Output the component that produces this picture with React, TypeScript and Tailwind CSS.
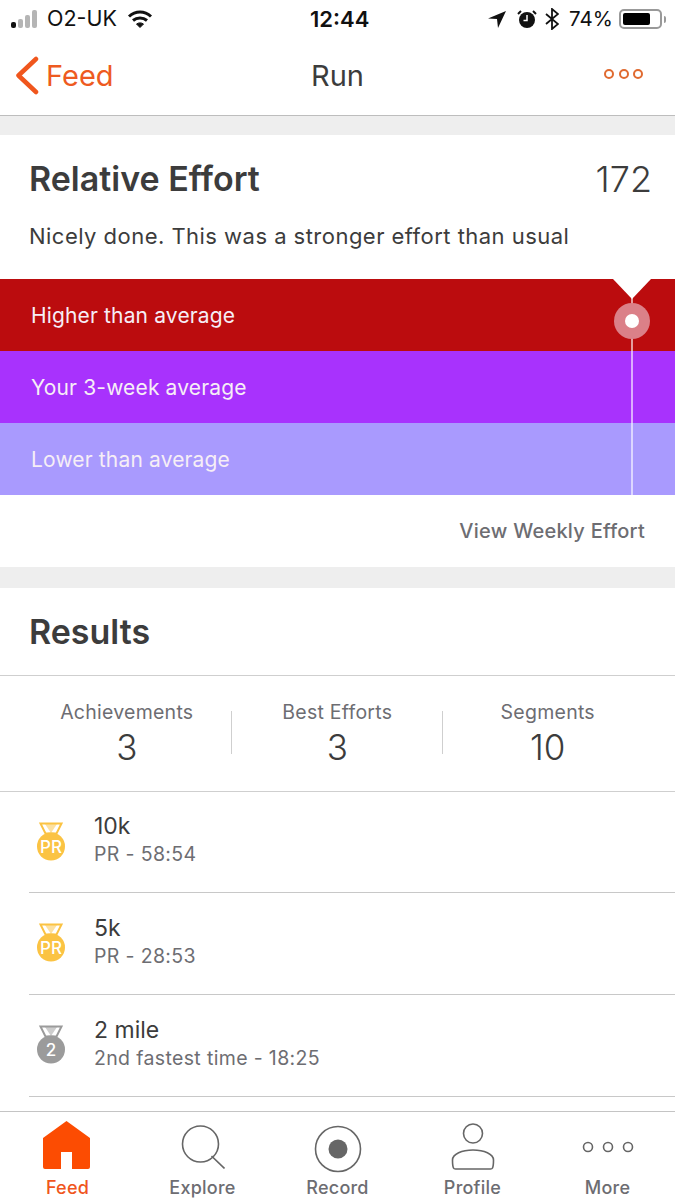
import type { ReactNode } from 'react'

const FONT = "font-['Inter','Noto_Sans',sans-serif]"

// Medal used in the results list
function Medal({ color, label }: { color: string; label: string }) {
  return (
    <svg width="30" height="40" viewBox="0 0 30 40">
      <path d="M4.500 1.500h21l-5 10H9.500z" fill="none" stroke={color} strokeWidth="2" />
      <path d="M9 2l6 9 6-9z" fill={color} opacity="0.5" />
      <circle cx="15" cy="24.500" r="14" fill={color} />
      <text x="15" y="30.500" textAnchor="middle" fontSize="17" fontWeight="500" fill="#fff" fontFamily="Inter, sans-serif">
        {label}
      </text>
    </svg>
  )
}

function StatusBar() {
  return (
    <div className="relative flex h-[38px] items-center pl-[11px] pr-[9px] text-[21px] text-[#111]">
      <div className="flex items-end gap-[2px]">
        <span className="h-[6px] w-[5px] rounded-[2px] bg-[#111]" />
        <span className="h-[9px] w-[5px] rounded-[2px] bg-[#b5b5b5]" />
        <span className="h-[13px] w-[5px] rounded-[2px] bg-[#b5b5b5]" />
        <span className="h-[18px] w-[5px] rounded-[2px] bg-[#b5b5b5]" />
      </div>
      <span className="ml-[10px] text-[21.500px] leading-none">O2-UK</span>
      <svg className="ml-[10px]" width="26" height="20" viewBox="0 0 26 20" fill="none" stroke="#111" strokeWidth="3">
        <path d="M2 7.500c6.500-6 15.500-6 22 0" />
        <path d="M6 11.500c4-3.500 10-3.500 14 0" />
        <path d="M13 18.500l-3.500-3.500c2-1.500 5-1.500 7 0z" fill="#111" strokeWidth="1" />
      </svg>
      <span className="absolute left-[310px] text-[22px] font-semibold leading-none">12:44</span>
      <div className="absolute left-[488px] flex items-center">
        <svg width="18" height="18" viewBox="0 0 18 18">
          <path d="M18 1L0 8.500l9 .5 1 9z" fill="#111" />
        </svg>
        <svg className="ml-[11px]" width="20" height="20" viewBox="0 0 20 20">
          <circle cx="10" cy="11" r="8" fill="#111" />
          <path d="M10 6v5.500H6.500" fill="none" stroke="#fff" strokeWidth="1.500" />
          <path d="M1 5l3-3M19 5l-3-3" stroke="#111" strokeWidth="2" />
        </svg>
        <svg className="ml-[8px]" width="14" height="22" viewBox="0 0 14 22" fill="none" stroke="#111" strokeWidth="1.800">
          <path d="M1 6l12 10-6 5V1l6 5L1 16" />
        </svg>
        <span className="ml-[10px] text-[20.500px] leading-none">74%</span>
        <div className="ml-[6px] flex h-[20px] w-[43px] items-center rounded-[5px] border-2 border-[#999] p-[2px]">
          <div className="h-full w-[27px] rounded-[2px] bg-black" />
        </div>
        <span className="ml-[2px] h-[7px] w-[2px] rounded-r bg-[#999]" />
      </div>
    </div>
  )
}

function NavBar() {
  return (
    <div className="relative flex h-[78px] items-center border-b border-[#bdbdbd] pb-[2px]">
      <svg className="ml-[15px]" width="24" height="40" viewBox="0 0 24 40" fill="none" stroke="#f0561d" strokeWidth="4.500" strokeLinecap="round" strokeLinejoin="round">
        <path d="M21 3L3.500 19.500 21 36" />
      </svg>
      <span className="ml-[7px] text-[29px] leading-none text-[#ee5a21]">Feed</span>
      <span className="absolute left-0 right-0 text-center text-[29px] leading-none text-[#3c3c3c]">Run</span>
      <div className="mb-[4px] ml-auto mr-[32px] flex gap-[4.500px]">
        <span className="size-[10px] rounded-full border-2 border-[#e06a30]" />
        <span className="size-[10px] rounded-full border-2 border-[#e06a30]" />
        <span className="size-[10px] rounded-full border-2 border-[#e06a30]" />
      </div>
    </div>
  )
}

function EffortBand({ bg, label }: { bg: string; label: string }) {
  return (
    <div className={`flex h-[72px] items-center pl-[31px] pt-[2px] text-[21px] tracking-[0.15px] ${bg} text-[#f6eef6]`}>
      {label}
    </div>
  )
}

function RelativeEffort() {
  return (
    <section className="bg-white">
      <div className="flex h-[144px] flex-col px-[29px] pt-[20px]">
        <div className="flex items-center justify-between">
          <h2 className="text-[34px] font-semibold leading-[48px] text-[#3c3c3c]">Relative Effort</h2>
          <span className="mr-[-6px] text-[36px] font-[350] leading-[48px] text-[#3c3c3c]">172</span>
        </div>
        <p className="mt-[18px] text-[22px] leading-[30px] tracking-[0.47px] text-[#3c3c3c]">
          Nicely done. This was a stronger effort than usual
        </p>
      </div>
      <div className="relative">
        <EffortBand bg="bg-[#bb0c0e]" label="Higher than average" />
        <EffortBand bg="bg-[#a832fd]" label="Your 3-week average" />
        <EffortBand bg="bg-[#a99afe]" label="Lower than average" />
        {/* marker over the bands */}
        <div className="absolute left-[631px] top-[19px] h-[197px] w-[2px] bg-white/60" />
        <div className="absolute left-[614px] top-[24px] flex size-[36px] items-center justify-center rounded-full bg-[#db8088]">
          <span className="size-[14px] rounded-full bg-white" />
        </div>
        <svg className="absolute left-[613px] top-0" width="38" height="20" viewBox="0 0 38 20">
          <path d="M0 0h38L19 20z" fill="#fff" />
        </svg>
      </div>
      <div className="flex h-[72px] items-center justify-end pr-[30px] text-[20px] font-medium tracking-[0.25px] text-[#6d6d72]">
        View Weekly Effort
      </div>
    </section>
  )
}

function Stat({ label, value, divider }: { label: string; value: string; divider?: boolean }) {
  return (
    <div className="relative flex w-[210.500px] flex-col items-center">
      <span className="text-[19.500px] leading-[24px] tracking-[0.25px] text-[#6d6d72]">{label}</span>
      <span className="mt-[2px] text-[35px] font-[350] leading-[42px] text-[#3c3c3c]">{value}</span>
      {divider && <span className="absolute right-0 top-[11px] h-[43px] w-px bg-[#cfcfcf]" />}
    </div>
  )
}

function ResultRow({ medal, title, detail, first }: { medal: ReactNode; title: string; detail: string; first?: boolean }) {
  return (
    <div className={`ml-[29px] flex items-center border-b border-[#c8c8c8] pb-[5px] ${first ? 'h-[101px]' : 'h-[102px]'}`}>
      <div className="ml-[7px] mt-[4px] w-[30px]">{medal}</div>
      <div className="ml-[28px]">
        <div className="text-[23px] leading-[28px] text-[#3c3c3c]">{title}</div>
        <div className="mt-[1px] text-[19.500px] leading-[26px] tracking-[0.35px] text-[#6d6d72]">{detail}</div>
      </div>
    </div>
  )
}

function Results() {
  return (
    <section className="flex-1 bg-white">
      <div className="flex h-[88px] items-center border-b border-[#cfcfcf] pl-[29px]">
        <h2 className="text-[34px] font-semibold leading-none text-[#3c3c3c]">Results</h2>
      </div>
      <div className="flex h-[116px] border-b border-[#cfcfcf] pl-[21.500px] pt-[24px]">
        <Stat label="Achievements" value="3" divider />
        <Stat label="Best Efforts" value="3" divider />
        <Stat label="Segments" value="10" />
      </div>
      <ResultRow first medal={<Medal color="#fbc343" label="PR" />} title="10k" detail="PR - 58:54" />
      <ResultRow medal={<Medal color="#fbc343" label="PR" />} title="5k" detail="PR - 28:53" />
      <ResultRow medal={<Medal color="#9b9b9b" label="2" />} title="2 mile" detail="2nd fastest time - 18:25" />
    </section>
  )
}

function Tab({ label, active, children }: { label: string; active?: boolean; children: ReactNode }) {
  return (
    <div className="flex w-[135px] flex-col items-center">
      <div className="flex h-[65px] items-center justify-center pt-[5px]">{children}</div>
      <span className={`text-[18px] font-medium leading-[22px] tracking-[0.25px] ${active ? 'text-[#f0561d]' : 'text-[#6d6d72]'}`}>
        {label}
      </span>
    </div>
  )
}

function TabBar() {
  return (
    <nav className="flex h-[89px] shrink-0 border-t border-[#c4c4c4] bg-white">
      <Tab label="Feed" active>
        <svg className="mb-[4px] mr-[2px]" width="47" height="48" viewBox="0 0 47 48">
          <path d="M23.500 0L47 17V46a2 2 0 0 1-2 2H29V31H18V48H2a2 2 0 0 1-2-2V17z" fill="#fc4c02" />
        </svg>
      </Tab>
      <Tab label="Explore">
        <svg width="44" height="44" viewBox="0 0 44 44" fill="none" stroke="#666" strokeWidth="1.600">
          <circle cx="19.500" cy="19" r="18" />
          <path d="M30.500 31l13 12.500" />
        </svg>
      </Tab>
      <Tab label="Record">
        <svg className="mt-[3px]" width="48" height="48" viewBox="0 0 48 48" fill="none">
          <circle cx="24" cy="24" r="22.500" stroke="#666" strokeWidth="1.600" />
          <circle cx="24" cy="24" r="9.500" fill="#666" />
        </svg>
      </Tab>
      <Tab label="Profile">
        <svg className="mb-[1px]" width="44" height="47" viewBox="0 0 44 47" fill="none" stroke="#666" strokeWidth="1.600">
          <circle cx="22" cy="10.500" r="9.500" />
          <path d="M22 27c-11 0-20.500 4-20.500 10 0 3.500.5 7 1 8 .3.700 1 1 2 1h35c1 0 1.700-.3 2-1 .5-1 1-4.500 1-8 0-6-9.500-10-20.500-10z" />
        </svg>
      </Tab>
      <Tab label="More">
        <svg className="mb-[1px]" width="52" height="12" viewBox="0 0 52 12" fill="none" stroke="#666" strokeWidth="1.600">
          <circle cx="6" cy="6" r="4.500" />
          <circle cx="26" cy="6" r="4.500" />
          <circle cx="46" cy="6" r="4.500" />
        </svg>
      </Tab>
    </nav>
  )
}

export default function App() {
  return (
    <div className={`flex h-[1200px] w-[675px] flex-col overflow-hidden bg-white ${FONT}`}>
      <StatusBar />
      <NavBar />
      <main className="flex min-h-0 flex-1 flex-col overflow-hidden bg-[#eeeeee] pt-[19px]">
        <RelativeEffort />
        <div className="h-[21px] shrink-0" />
        <Results />
      </main>
      <TabBar />
    </div>
  )
}
